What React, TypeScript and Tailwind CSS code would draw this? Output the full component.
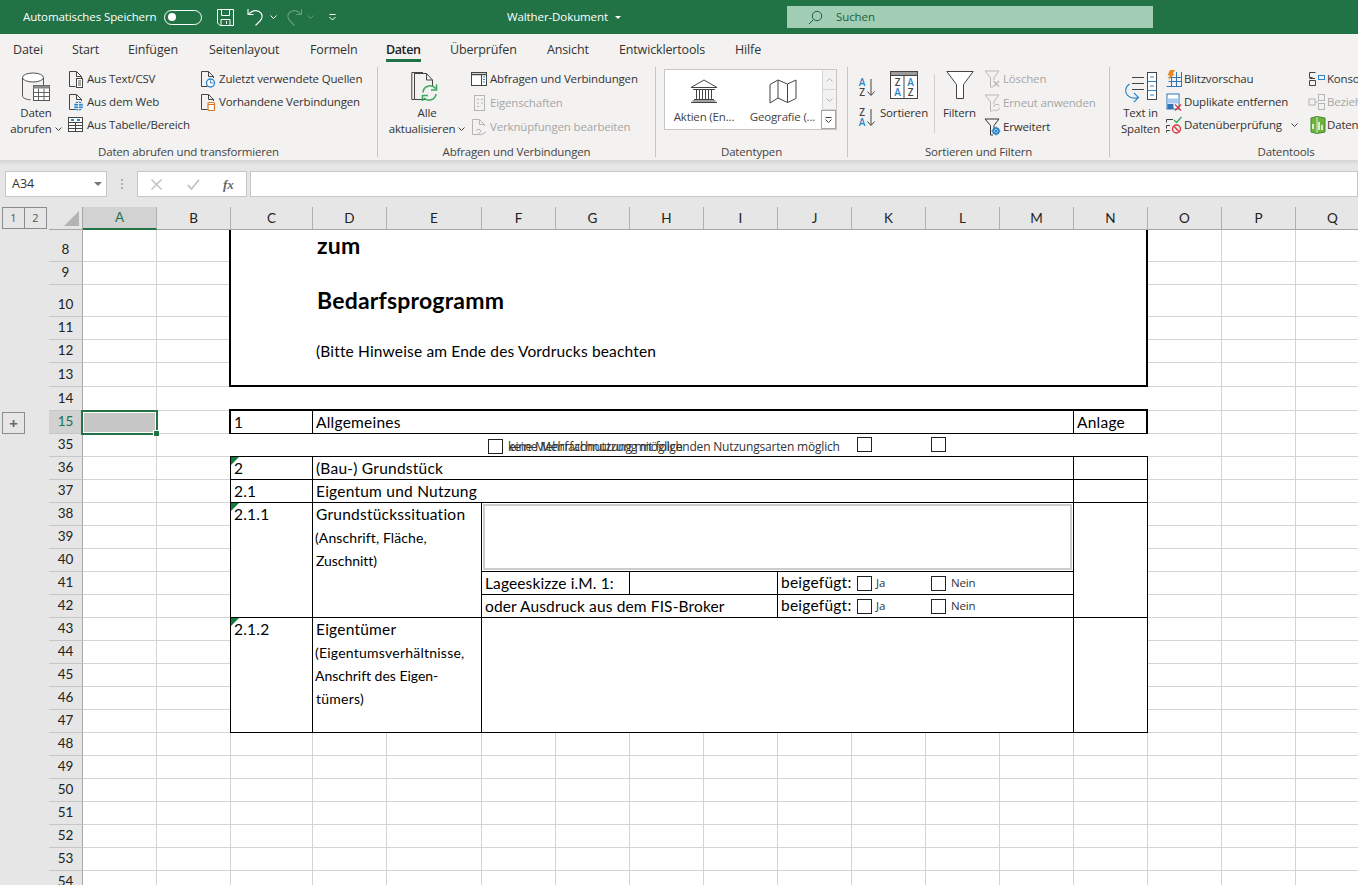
import React from "react";

const uiFont = "Open Sans, sans-serif";
const cols = ["A","B","C","D","E","F","G","H","I","J","K","L","M","N","O","P","Q"];
const rows = [8,9,10,11,12,13,14,15,35,36,37,38,39,40,41,42,43,44,45,46,47,48,49,50,51,52,53,54];

const S = ({ w, h, children, className = "" }: { w: number; h: number; children: React.ReactNode; className?: string }) => (
  <svg width={w} height={h} viewBox={`0 0 ${w} ${h}`} fill="none" className={`shrink-0 ${className}`}>{children}</svg>
);

const Page = ({ c = "#444" }: { c?: string }) => (
  <path d="M7.5 16.5H1.5V1.5H8.5L13.5 6.5V8M8.5 1.5V6.5H13.5" stroke={c} />
);

const IDb = () => (
  <S w={30} h={31}>
    <ellipse cx="12" cy="6.5" rx="10.5" ry="4.5" stroke="#555" fill="#fff" />
    <path d="M1.5 6.5V25C1.5 27 5 28.5 9.5 28.8M22.5 6.5V14" stroke="#555" />
    <rect x="12.5" y="14.5" width="16" height="15" fill="#fff" stroke="#555" />
    <rect x="12.5" y="14.5" width="16" height="3" fill="#8a8a8a" />
    <path d="M12.5 21.5H28.5M12.5 25.5H28.5M17.5 17.5V29.5M23 17.5V29.5" stroke="#666" />
  </S>
);
const IText = () => (
  <S w={17} h={18}><Page /><rect x="8.5" y="8.5" width="6" height="9" fill="#fff" stroke="#444" /><path d="M10 11H13M10 13H13M10 15H13" stroke="#555" /></S>
);
const IWeb = () => (
  <S w={17} h={18}><Page /><circle cx="10.5" cy="13" r="4.5" fill="#2e86c9" /><path d="M6 13H15M10.5 8.5V17.5M7 10.5H14M7 15.5H14" stroke="#fff" strokeWidth=".8" /></S>
);
const ITable = () => (
  <S w={17} h={16}>
    <rect x=".5" y=".5" width="14" height="14" fill="#fff" stroke="#444" />
    <path d="M3 3H6M9 3H12" stroke="#2e86c9" strokeWidth="2" />
    <path d="M.5 5.5H14.5M.5 8.5H14.5M.5 11.5H14.5M7.5 5.5V14.5" stroke="#444" />
  </S>
);
const IClock = () => (
  <S w={17} h={18}><Page /><circle cx="10.5" cy="13" r="4" fill="#fff" stroke="#2e86c9" strokeWidth="1.4" /><path d="M10.5 10.5V13H13" stroke="#2e86c9" /></S>
);
const IExisting = () => (
  <S w={17} h={18}><Page /><rect x="8" y="9.5" width="6.5" height="8" rx="1" fill="#fff" stroke="#d9792b" strokeWidth="1.2" /><path d="M8 11.5H14.5" stroke="#d9792b" /></S>
);
const IRefresh = () => (
  <S w={32} h={31}>
    <path d="M3.5 28.5H.8V1.5H12" stroke="#444" />
    <path d="M3.5 1.5V28.5H15M3.5 2.5H15.5L21.5 9V15M15.5 2.5V9H21.5" stroke="#444" fill="#f3f2f1" />
    <path d="M12 21.5A7 7 0 0 1 24.5 17.5M25 23A7 7 0 0 1 13 27" stroke="#39a860" strokeWidth="1.6" />
    <path d="M25.5 13.5V19H20M11.5 30V24.5H17" stroke="#39a860" strokeWidth="1.6" />
  </S>
);
const IQueries = () => (
  <S w={17} h={15}><rect x=".5" y=".5" width="15" height="13" fill="#fff" stroke="#444" /><path d="M.5 2.5H15.5" stroke="#444" strokeWidth="1.5" /><path d="M10.5 2.5V13.5" stroke="#444" /><path d="M12 5H14M12 7.5H14M12 10H14" stroke="#2e86c9" /></S>
);
const IProps = () => (
  <S w={17} h={17}><rect x="3.5" y=".5" width="10" height="15" stroke="#b5b5b5" /><path d="M6 4.5H8M10 4.5H12M6 8H8M6 11.5H8M10 8H12" stroke="#b5b5b5" /></S>
);
const ILink = () => (
  <S w={17} h={18}><Page c="#b5b5b5" /><path d="M5 12.5C8 10 11 12 9.5 14S6 15.5 7.5 16.5 12.5 16 15 14" stroke="#b5b5b5" /></S>
);
const IBank = () => (
  <S w={28} h={26}>
    <path d="M1 9.5L14 2L27 9.5H1Z" stroke="#444" />
    <path d="M3 11.5H25M4 21.5H24M1 24.5H27M2.5 23H25.5" stroke="#444" />
    <path d="M6.5 11.5V21.5M9.5 11.5V21.5M12.5 11.5V21.5M15.5 11.5V21.5M18.5 11.5V21.5M21.5 11.5V21.5" stroke="#444" />
  </S>
);
const IMap = () => (
  <S w={28} h={26}>
    <path d="M1 6.5L9 2V20L1 25V6.5ZM9 2L18.5 6V24.5L9 20M18.5 6L27 2V20.5L18.5 24.5" stroke="#444" strokeLinejoin="round" />
  </S>
);
const Letter = ({ x, y, t, c = "#444", s = 10 }: { x: number; y: number; t: string; c?: string; s?: number }) => (
  <text x={x} y={y} fontSize={s} fontWeight={600} fontFamily={uiFont} fill={c} textAnchor="middle">{t}</text>
);
const IAZ = ({ rev = false }: { rev?: boolean }) => (
  <S w={19} h={20}>
    <Letter x={5} y={9} t={rev ? "Z" : "A"} c={rev ? "#444" : "#2e86c9"} />
    <Letter x={5} y={19} t={rev ? "A" : "Z"} c={rev ? "#2e86c9" : "#444"} />
    <path d="M14 2V18M10.5 14.5L14 18.5L17.5 14.5" stroke="#444" />
  </S>
);
const ISort = () => (
  <S w={28} h={28}>
    <rect x=".5" y=".5" width="27" height="27" fill="#fff" stroke="#444" />
    <rect x="1" y="1" width="26" height="3.5" fill="#9b9b9b" />
    <path d="M14 4.5V27.5M.5 4.5H27.5" stroke="#444" />
    <Letter x={7.5} y={15} t="Z" s={10} />
    <Letter x={7.5} y={25} t="A" c="#2e86c9" s={10} />
    <Letter x={20.5} y={15} t="A" c="#2e86c9" s={10} />
    <Letter x={20.5} y={25} t="Z" s={10} />
  </S>
);
const IFunnel = () => (
  <S w={28} h={29}><path d="M.8 .5H27.2L17.5 13.5V27.5H10.5V13.5L.8 .5Z" stroke="#444" fill="#fff" /></S>
);
const FunnelSm = ({ c }: { c: string }) => <path d="M1 1H15L10 7.5V10M9 17H6.5V7.5L1 1" stroke={c} />;
const IClear = () => (
  <S w={18} h={18}><FunnelSm c="#b5b5b5" /><path d="M9.5 11L15 16.5M15 11L9.5 16.5" stroke="#b5b5b5" strokeWidth="1.2" /></S>
);
const IReapply = () => (
  <S w={18} h={18}><FunnelSm c="#b5b5b5" /><path d="M9.5 13A3.5 3.5 0 0 1 15.5 11.5M15.5 14A3.5 3.5 0 0 1 9.5 15.5" stroke="#b5b5b5" /></S>
);
const IAdv = () => (
  <S w={18} h={18}><FunnelSm c="#333" /><circle cx="12" cy="13" r="3" stroke="#2e86c9" strokeWidth="1.6" /><path d="M12 8.5V17.5M7.5 13H16.5M9 10L15 16M15 10L9 16" stroke="#2e86c9" strokeWidth=".9" /></S>
);
const ISplit = () => (
  <S w={34} h={32}>
    <path d="M8 6.5H20M8 12.5H20M8 18.5H20" stroke="#444" />
    <rect x="23.5" y="1.5" width="9" height="27" fill="#fff" stroke="#444" />
    <path d="M23.5 10.5H32.5M23.5 19.5H32.5M26 6H30M26 15H30M26 24H30" stroke="#2e86c9" />
    <path d="M5.5 13C1 16 0 22 5 25.5C8 27.5 11 27.5 14 26.5M10 31L14.5 26.5L10 22" stroke="#2e86c9" strokeWidth="1.1" />
  </S>
);
const IFlash = () => (
  <S w={18} h={17}>
    <path d="M3.5 7.5H16.5V16.5H1.5M3.5 11.5H16.5M6.5 7.5V16.5M11.5 2V16.5M16.5 2V7.5" stroke="#2e75b5" />
    <path d="M5 0H10L7.5 4H9.5L3.5 10L5 5.5H2.5L5 0Z" fill="#e8851c" />
  </S>
);
const IDup = () => (
  <S w={18} h={18}>
    <rect x="2" y="1" width="12" height="15" fill="#fff" stroke="#2e75b5" />
    <rect x="2.5" y="5.5" width="11" height="5" fill="#a8cdf0" />
    <rect x="2.5" y="11" width="6" height="5" fill="#2e75b5" />
    <path d="M10 11.5L16 17.5M16 11.5L10 17.5" stroke="#d83b3b" strokeWidth="1.3" />
  </S>
);
const IValid = () => (
  <S w={18} h={18}>
    <path d="M1.5 3.5H8M1.5 3.5V6.5M1.5 9.5H5M1.5 9.5V12.5M1.5 14.5H5M1.5 14.5V16.5" stroke="#444" />
    <path d="M9 4L11.5 6.5L16.5 1" stroke="#39a860" strokeWidth="1.3" />
    <circle cx="11.5" cy="13" r="4" stroke="#d83b3b" strokeWidth="1.4" />
    <path d="M9 10.5L14 15.5" stroke="#d83b3b" strokeWidth="1.4" />
  </S>
);
const IConsol = () => (
  <S w={18} h={16}><path d="M7.5 1.5H1.5V6.5H4.5M1.5 9.5H7.5V14.5H1.5V9.5M1.5 7.5H7" stroke="#444" /><rect x="10.5" y="4.5" width="6" height="4" stroke="#2e86c9" /></S>
);
const IRel = () => (
  <S w={18} h={16}><rect x="1" y="5" width="6" height="6" stroke="#b5b5b5" /><rect x="10.5" y=".5" width="6" height="6" stroke="#b5b5b5" /><rect x="10.5" y="9.5" width="6" height="6" stroke="#b5b5b5" /><path d="M7 8H10.5" stroke="#b5b5b5" /></S>
);
const IModel = () => (
  <S w={18} h={18}>
    <path d="M3 2L9 .5L17 2V16L9 17.5L3 16Z" fill="#6fb23f" stroke="#3f8a2b" />
    <path d="M9 1V17" stroke="#dcefc7" />
    <path d="M5 13V8M11 14V6M14 14V9" stroke="#fff" strokeWidth="1.5" />
  </S>
);
const Chev = ({ c = "#444" }: { c?: string }) => (
  <S w={7} h={4} className="inline-block"><path d="M.5 .5L3.5 3.5L6.5 .5" stroke={c} /></S>
);

const Small = ({ icon, text, off = false, h = "h-[23px]", children }: { icon: React.ReactNode; text: string; off?: boolean; h?: string; children?: React.ReactNode }) => (
  <div className={`flex items-center ${h}`}>
    <div className="w-[19px] flex justify-start">{icon}</div>
    <span className={`whitespace-nowrap ${off ? "text-[#a6a6a6]" : "text-[#333]"}`}>{text}</span>
    {children}
  </div>
);

const Large = ({ icon, l1, l2, w, chev = false }: { icon: React.ReactNode; l1: string; l2?: string; w: string; chev?: boolean }) => (
  <div className={`flex flex-col items-center shrink-0 ${w}`}>
    <div className="h-[38px] pt-[4px] flex justify-center">{icon}</div>
    <div className="h-[16px] leading-[16px] text-[#333] whitespace-nowrap">{l1}</div>
    {l2 && (
      <div className="h-[16px] leading-[16px] text-[#333] whitespace-nowrap flex items-center gap-[3px]">
        {l2}{chev && <Chev />}
      </div>
    )}
  </div>
);

const Group = ({ w, label, children }: { w: string; label: string; children: React.ReactNode }) => (
  <div className={`shrink-0 mt-[1px] h-[90px] flex flex-col border-r border-[#c8c6c4] ${w}`}>
    <div className="flex h-[78px] shrink-0">{children}</div>
    <div className="h-[12px] leading-[14px] text-center text-[#444]">{label}</div>
  </div>
);

const tabs = [
  ["Datei", "w-[59px]"], ["Start", "w-[56px]"], ["Einfügen", "w-[81px]"], ["Seitenlayout", "w-[101px]"],
  ["Formeln", "w-[76px]"], ["Daten", "w-[64px]"], ["Überprüfen", "w-[97px]"], ["Ansicht", "w-[72px]"],
  ["Entwicklertools", "w-[116px]"], ["Hilfe", "w-[60px]"],
];

const TitleBar = () => (
  <div className="h-[34px] bg-[#217346] flex items-center text-white text-[11.5px] tracking-[-0.1px]">
    <span className="ml-[23px] w-[141px] whitespace-nowrap">Automatisches Speichern</span>
    <div className="w-[38px] h-[15px] rounded-full border border-white flex items-center pl-[3px]">
      <div className="w-[8px] h-[8px] rounded-full bg-white" />
    </div>
    <S w={17} h={17} className="ml-[15px]">
      <path d="M.5 .5H16.5V16.5H3L.5 14V.5Z" stroke="#fff" />
      <path d="M4.5 .5V6.5H12.5V.5M4 16.5V10.5H13V16.5M9.5 12V15" stroke="#fff" />
    </S>
    <S w={17} h={18} className="ml-[13px]">
      <path d="M1 1V6.5H6.5M1.5 6.5C5 2.5 9 2 12 3.5C16 5.5 16 10 13 13L8.5 17.5" stroke="#fff" strokeWidth="1.1" />
    </S>
    <div className="ml-[6px] flex"><Chev c="#fff" /></div>
    <S w={17} h={18} className="ml-[9px] opacity-30">
      <path d="M15.5 1V6.5H10M15 6.5C12 2.5 8 2 5 3.5C1 5.5 1 10 4 13L8.5 17.5" stroke="#fff" strokeWidth="1.1" />
    </S>
    <div className="ml-[4px] flex opacity-30"><Chev c="#fff" /></div>
    <S w={8} h={7} className="ml-[15px]"><path d="M.5 .5H6.5M.5 3L3.5 6L6.5 3" stroke="#fff" /></S>
    <span className="ml-[170px] w-[108px] whitespace-nowrap -mt-px">Walther-Dokument</span>
    <S w={6} h={3}><path d="M0 0H6L3 3Z" fill="#fff" /></S>
    <div className="ml-[166px] w-[366px] h-[22px] bg-[#a0cdb3] flex items-center pl-[21px] text-[#1d5f3a]">
      <S w={15} h={15}><circle cx="9" cy="6" r="4.7" stroke="#1d5f3a" /><path d="M5.5 9.5L1 14" stroke="#1d5f3a" /></S>
      <span className="ml-[13px]">Suchen</span>
    </div>
  </div>
);

const Tabs = () => (
  <div className="h-[32px] bg-[#f3f2f1] flex pl-[13px] text-[12.5px] tracking-[-0.15px] text-[#333]">
    {tabs.map(([t, w]) => (
      <div key={t} className={`shrink-0 pt-[6px] ${w}`}>
        <div className={`inline-block h-[22px] leading-[19px] whitespace-nowrap ${t === "Daten" ? "border-b-[3px] border-[#217346] font-semibold text-[#222] tracking-[-0.4px]" : ""}`}>{t}</div>
      </div>
    ))}
  </div>
);

const Ribbon = () => (
  <div className="h-[94px] bg-[#f3f2f1] flex overflow-hidden text-[11.5px] tracking-[-0.17px]">
    <Group w="w-[378px]" label="Daten abrufen und transformieren">
      <div className="pl-[4px]"><Large w="w-[64px]" icon={<IDb />} l1="Daten" l2="abrufen" chev /></div>
      <div className="w-[132px]">
        <Small icon={<IText />} text="Aus Text/CSV" />
        <Small icon={<IWeb />} text="Aus dem Web" />
        <Small icon={<ITable />} text="Aus Tabelle/Bereich" />
      </div>
      <div>
        <Small icon={<IClock />} text="Zuletzt verwendete Quellen" />
        <Small icon={<IExisting />} text="Vorhandene Verbindungen" />
      </div>
    </Group>
    <Group w="w-[278px]" label="Abfragen und Verbindungen">
      <div className="pl-[6px]"><Large w="w-[86px]" icon={<IRefresh />} l1="Alle" l2="aktualisieren" chev /></div>
      <div className="pl-[1px]">
        <Small h="h-[24px]" icon={<IQueries />} text="Abfragen und Verbindungen" />
        <Small h="h-[24px]" off icon={<IProps />} text="Eigenschaften" />
        <Small h="h-[24px]" off icon={<ILink />} text="Verknüpfungen bearbeiten" />
      </div>
    </Group>
    <Group w="w-[192px]" label="Datentypen">
      <div className="pl-[8px] pt-[2px]">
        <div className="w-[173px] h-[61px] bg-white border border-[#c8c6c4] flex">
          <div className="w-[78px] flex flex-col items-center pt-[8px]">
            <IBank />
            <span className="mt-[4px] whitespace-nowrap text-[#444]">Aktien (En...</span>
          </div>
          <div className="w-[79px] flex flex-col items-center pt-[8px]">
            <IMap />
            <span className="mt-[4px] whitespace-nowrap text-[#444]">Geografie (...</span>
          </div>
          <div className="w-[14px] flex flex-col bg-[#f3f2f1]">
            <div className="h-[20px] border-l border-b border-[#d6d6d6] flex items-center justify-center"><S w={7} h={4}><path d="M.5 3.5L3.5 .5L6.5 3.5" stroke="#b5b5b5" /></S></div>
            <div className="h-[20px] border-l border-b border-[#d6d6d6] flex items-center justify-center"><Chev c="#b5b5b5" /></div>
            <div className="flex-1 border border-[#a6a6a6] -ml-px flex items-center justify-center bg-white"><S w={7} h={6}><path d="M.5 .5H6.5M.5 2.5L3.5 5.5L6.5 2.5" stroke="#444" /></S></div>
          </div>
        </div>
      </div>
    </Group>
    <Group w="w-[262px]" label="Sortieren und Filtern">
      <div className="w-[32px] pl-[9px] pt-[10px] flex flex-col gap-[10px]"><IAZ /><IAZ rev /></div>
      <Large w="w-[48px]" icon={<ISort />} l1="Sortieren" />
      <div className="ml-[6px] mt-[7px] h-[59px] w-px bg-[#d2d0ce]" />
      <Large w="w-[49px]" icon={<IFunnel />} l1="Filtern" />
      <div>
        <Small h="h-[24px]" off icon={<IClear />} text="Löschen" />
        <Small h="h-[24px]" off icon={<IReapply />} text="Erneut anwenden" />
        <Small h="h-[24px]" icon={<IAdv />} text="Erweitert" />
      </div>
    </Group>
    <Group w="w-[353px]" label="Datentools">
      <div className="pl-[6px]"><Large w="w-[49px]" icon={<ISplit />} l1="Text in" l2="Spalten" /></div>
      <div className="w-[143px]">
        <Small icon={<IFlash />} text="Blitzvorschau" />
        <Small icon={<IDup />} text="Duplikate entfernen" />
        <Small icon={<IValid />} text="Datenüberprüfung">
          <div className="ml-[9px] flex"><Chev /></div>
        </Small>
      </div>
      <div>
        <Small icon={<IConsol />} text="Konsolidieren" />
        <Small off icon={<IRel />} text="Beziehungen" />
        <Small icon={<IModel />} text="Datenmodell verwalten" />
      </div>
    </Group>
  </div>
);

const FormulaBar = () => (
  <div className="h-[42px] bg-[#e6e6e6] flex pt-[6px] pl-[5px] text-[#333]">
    <div className="w-[102px] h-[26px] bg-white border border-[#c6c6c6] flex items-center justify-between pl-[6px] pr-[4px] text-[12.5px]">
      <span>A34</span>
      <S w={8} h={4}><path d="M0 0H8L4 4Z" fill="#777" /></S>
    </div>
    <div className="w-[30px] h-[26px] flex flex-col items-center justify-center gap-[2px]">
      <div className="w-[2px] h-[2px] bg-[#b0b0b0]" />
      <div className="w-[2px] h-[2px] bg-[#b0b0b0]" />
      <div className="w-[2px] h-[2px] bg-[#b0b0b0]" />
    </div>
    <div className="w-[110px] h-[26px] bg-white border border-[#c6c6c6] flex items-center pl-[13px]">
      <S w={11} h={11}><path d="M.5 .5L10.5 10.5M10.5 .5L.5 10.5" stroke="#bdbdbd" strokeWidth="1.4" /></S>
      <S w={13} h={11} className="ml-[25px]"><path d="M.8 6L4.5 10L12 .8" stroke="#bdbdbd" strokeWidth="1.6" /></S>
      <span className="ml-[23px] font-['Liberation_Serif',serif] italic text-[13px] font-bold text-[#666] leading-none">fx</span>
    </div>
    <div className="ml-[3px] flex-1 h-[26px] bg-white border border-[#c6c6c6]" />
  </div>
);

const OutlineBtn = ({ children, className = "" }: { children: React.ReactNode; className?: string }) => (
  <div className={`w-[23px] h-[22px] border border-[#8c8c8c] flex items-center justify-center text-[11px] text-[#555] font-['Open_Sans',sans-serif] tracking-normal ${className}`}>{children}</div>
);

const Tri = () => (
  <S w={8} h={8} className="absolute top-0 left-0"><path d="M0 0H8L0 8Z" fill="#107c41" /></S>
);

const L = ({ children, className = "" }: { children?: React.ReactNode; className?: string }) => (
  <div className={`h-[23px] leading-[23px] whitespace-nowrap ${className}`}>{children}</div>
);

const Box = "relative -mt-px border-t border-r border-b border-black bg-white pl-[3px] overflow-hidden";
const First = "-ml-px border-l";

const Check = ({ className = "" }: { className?: string }) => (
  <div className={`w-[15px] h-[15px] shrink-0 border border-[#222] bg-white ${className}`} />
);

const Attached = () => (
  <div className="flex items-center h-[23px] pb-[1px]">
    <span className="w-[76px] whitespace-nowrap">beigefügt:</span>
    <div className="w-[74px] flex items-center">
      <Check />
      <span className="ml-[4px] font-['Open_Sans',sans-serif] text-[11.5px] tracking-[-0.2px] text-[#333]">Ja</span>
    </div>
    <Check />
    <span className="ml-[5px] font-['Open_Sans',sans-serif] text-[11.5px] tracking-[-0.2px] text-[#333]">Nein</span>
  </div>
);

const Sheet = () => (
  <div className="grid grid-cols-[49px_34px_74px_74px_82px_74px_95px_repeat(12,74px)] grid-rows-[23px_32px_23px_32px_23px_23px_24px_24px_repeat(21,23px)] bg-white font-['Lato',sans-serif] text-[15.5px] tracking-[0.23px] text-black">
    {/* header row */}
    <div className="bg-[#e6e6e6] flex pl-[2px]" style={{ gridColumn: 1, gridRow: 1 }}>
      <OutlineBtn>1</OutlineBtn>
      <OutlineBtn className="-ml-px">2</OutlineBtn>
    </div>
    <div className="bg-[#e6e6e6] border-r border-b border-[#a6a6a6] flex items-end justify-end pr-[3px] pb-[3px]" style={{ gridColumn: 2, gridRow: 1 }}>
      <S w={15} h={15}><path d="M15 0V15H0Z" fill="#b4b4b4" /></S>
    </div>
    {cols.map((c, i) => (
      <div key={c} style={{ gridColumn: i + 3, gridRow: 1 }} className={`flex items-center justify-center text-[13.5px] tracking-normal ${c === "A" ? "bg-[#d2d2d2] text-[#217346] border-b-2 border-b-[#217346] border-r border-r-[#b0b0b0]" : "bg-[#e6e6e6] text-[#222] border-r border-r-[#b0b0b0] border-b border-b-[#a6a6a6]"}`}>{c}</div>
    ))}
    {/* rows */}
    {rows.map((r, ri) => (
      <React.Fragment key={r}>
        <div className="bg-[#e6e6e6] pl-[2px] pt-px" style={{ gridColumn: 1, gridRow: ri + 2 }}>
          {r === 15 && <OutlineBtn><span className="text-[15px] leading-none font-bold text-[#666]">+</span></OutlineBtn>}
        </div>
        <div style={{ gridColumn: 2, gridRow: ri + 2 }} className={`flex items-end justify-center border-r border-r-[#a6a6a6] border-b border-b-[#c6c6c6] text-[13.5px] tracking-normal leading-[23px] ${r === 15 ? "bg-[#d2d2d2] text-[#217346]" : "bg-[#e6e6e6] text-[#222]"}`}>{r}</div>
        {cols.map((c, ci) => (
          <div key={c} style={{ gridColumn: ci + 3, gridRow: ri + 2 }} className="border-r border-b border-[#d4d4d4]" />
        ))}
      </React.Fragment>
    ))}

    {/* selected cell */}
    <div className="relative col-start-3 row-start-9 -ml-[2px] -mt-px -mb-px -mr-px border-2 border-[#217346] bg-[#c6c6c6] ring-1 ring-inset ring-white">
      <div className="absolute -right-[3px] -bottom-[3px] w-[5px] h-[5px] bg-[#217346] border-l border-t border-white box-content" />
    </div>

    {/* title box */}
    <div className="col-start-5 col-end-17 row-start-2 row-end-8 -ml-[2px] border-l-2 border-r-2 border-b-2 border-black bg-white pl-[86px] flex flex-col">
      <div className="h-[32px] leading-[30px] text-[23px] font-bold">zum</div>
      <div className="h-[23px]" />
      <div className="h-[32px] leading-[30px] text-[23px] font-bold tracking-[0.2px]">Bedarfsprogramm</div>
      <div className="h-[23px]" />
      <div className="h-[23px] leading-[23px] -ml-px tracking-[0.16px]">(Bitte Hinweise am Ende des Vordrucks beachten</div>
    </div>
    {/* row 14 blank */}
    <div className="col-start-5 col-end-17 row-start-8 -ml-px bg-white" />

    {/* row 15 */}
    <div className="col-start-5 row-start-9 -ml-[2px] -mt-[2px] border-l-2 border-t-2 border-r border-b border-black bg-white pl-[3px] leading-[23px]">1</div>
    <div className="col-start-6 col-end-16 row-start-9 -mt-[2px] border-t-2 border-r border-b border-black bg-white pl-[3px] leading-[23px]">Allgemeines</div>
    <div className="col-start-16 row-start-9 -mt-[2px] border-t-2 border-r-2 border-b border-black bg-white pl-[3px] leading-[23px]">Anlage</div>

    {/* row 35 */}
    <div className="relative col-start-5 col-end-17 row-start-10 -ml-px bg-white flex pl-[258px] font-['Open_Sans',sans-serif] text-[12px] tracking-[-0.18px] text-[#333]">
      <Check className="mt-[5px]" />
      <span className="absolute left-[278px] top-[4px] whitespace-nowrap leading-[17px]">keine Mehrfachnutzung möglich</span>
      <span className="ml-[6px] mt-[4px] w-[348px] leading-[17px] whitespace-nowrap">eine Mehrfachnutzung mit folgenden Nutzungsarten möglich</span>
      <Check className="mt-[3px]" />
      <Check className="mt-[3px] ml-[59px]" />
    </div>

    {/* rows 36-37 */}
    <div className={`col-start-5 row-start-11 ${Box} ${First}`}><Tri /><L>2</L></div>
    <div className={`col-start-6 col-end-16 row-start-11 ${Box}`}><L>(Bau-) Grundstück</L></div>
    <div className={`col-start-16 row-start-11 ${Box}`} />
    <div className={`col-start-5 row-start-12 ${Box} ${First}`}><L>2.1</L></div>
    <div className={`col-start-6 col-end-16 row-start-12 ${Box}`}><L>Eigentum und Nutzung</L></div>
    <div className={`col-start-16 row-start-12 ${Box}`} />

    {/* rows 38-42 */}
    <div className={`col-start-5 row-start-13 row-end-18 ${Box} ${First}`}><Tri /><L>2.1.1</L></div>
    <div className={`col-start-6 col-end-8 row-start-13 row-end-18 ${Box}`}>
      <L>Grundstückssituation</L>
      <L className="text-[14px] -ml-px tracking-[0.1px]">(Anschrift, Fläche,</L>
      <L className="text-[14px] tracking-[-0.05px]">Zuschnitt)</L>
    </div>
    <div className="col-start-8 col-end-16 row-start-13 row-end-16 -mt-px border-t border-r border-b border-black bg-white p-px flex">
      <div className="flex-1 border-2 border-[#cdcdcd]" />
    </div>
    <div className={`col-start-16 row-start-13 row-end-18 ${Box}`} />
    <div className={`col-start-8 col-end-10 row-start-16 ${Box}`}><L className="tracking-[0.12px]">Lageeskizze i.M. 1:</L></div>
    <div className={`col-start-10 col-end-12 row-start-16 ${Box}`} />
    <div className={`col-start-12 col-end-16 row-start-16 ${Box}`}><Attached /></div>
    <div className={`col-start-8 col-end-12 row-start-17 ${Box}`}><L className="tracking-[0.13px]">oder Ausdruck aus dem FIS-Broker</L></div>
    <div className={`col-start-12 col-end-16 row-start-17 ${Box}`}><Attached /></div>

    {/* rows 43-47 */}
    <div className={`col-start-5 row-start-18 row-end-23 ${Box} ${First}`}><Tri /><L>2.1.2</L></div>
    <div className={`col-start-6 col-end-8 row-start-18 row-end-23 ${Box}`}>
      <L>Eigentümer</L>
      <L className="text-[14px] -ml-px">(Eigentumsverhältnisse,</L>
      <L className="text-[14px] -ml-px tracking-[-0.02px]">Anschrift des Eigen-</L>
      <L className="text-[14px]">tümers)</L>
    </div>
    <div className={`col-start-8 col-end-16 row-start-18 row-end-23 ${Box}`} />
    <div className={`col-start-16 row-start-18 row-end-23 ${Box}`} />
  </div>
);

export default function App() {
  return (
    <div className="w-[1358px] h-[885px] overflow-hidden bg-[#e6e6e6] font-['Open_Sans',sans-serif]">
      <TitleBar />
      <Tabs />
      <Ribbon />
      <div className="h-[5px] bg-gradient-to-b from-[#d4d4d4] to-[#e6e6e6]" />
      <FormulaBar />
      <Sheet />
    </div>
  );
}
